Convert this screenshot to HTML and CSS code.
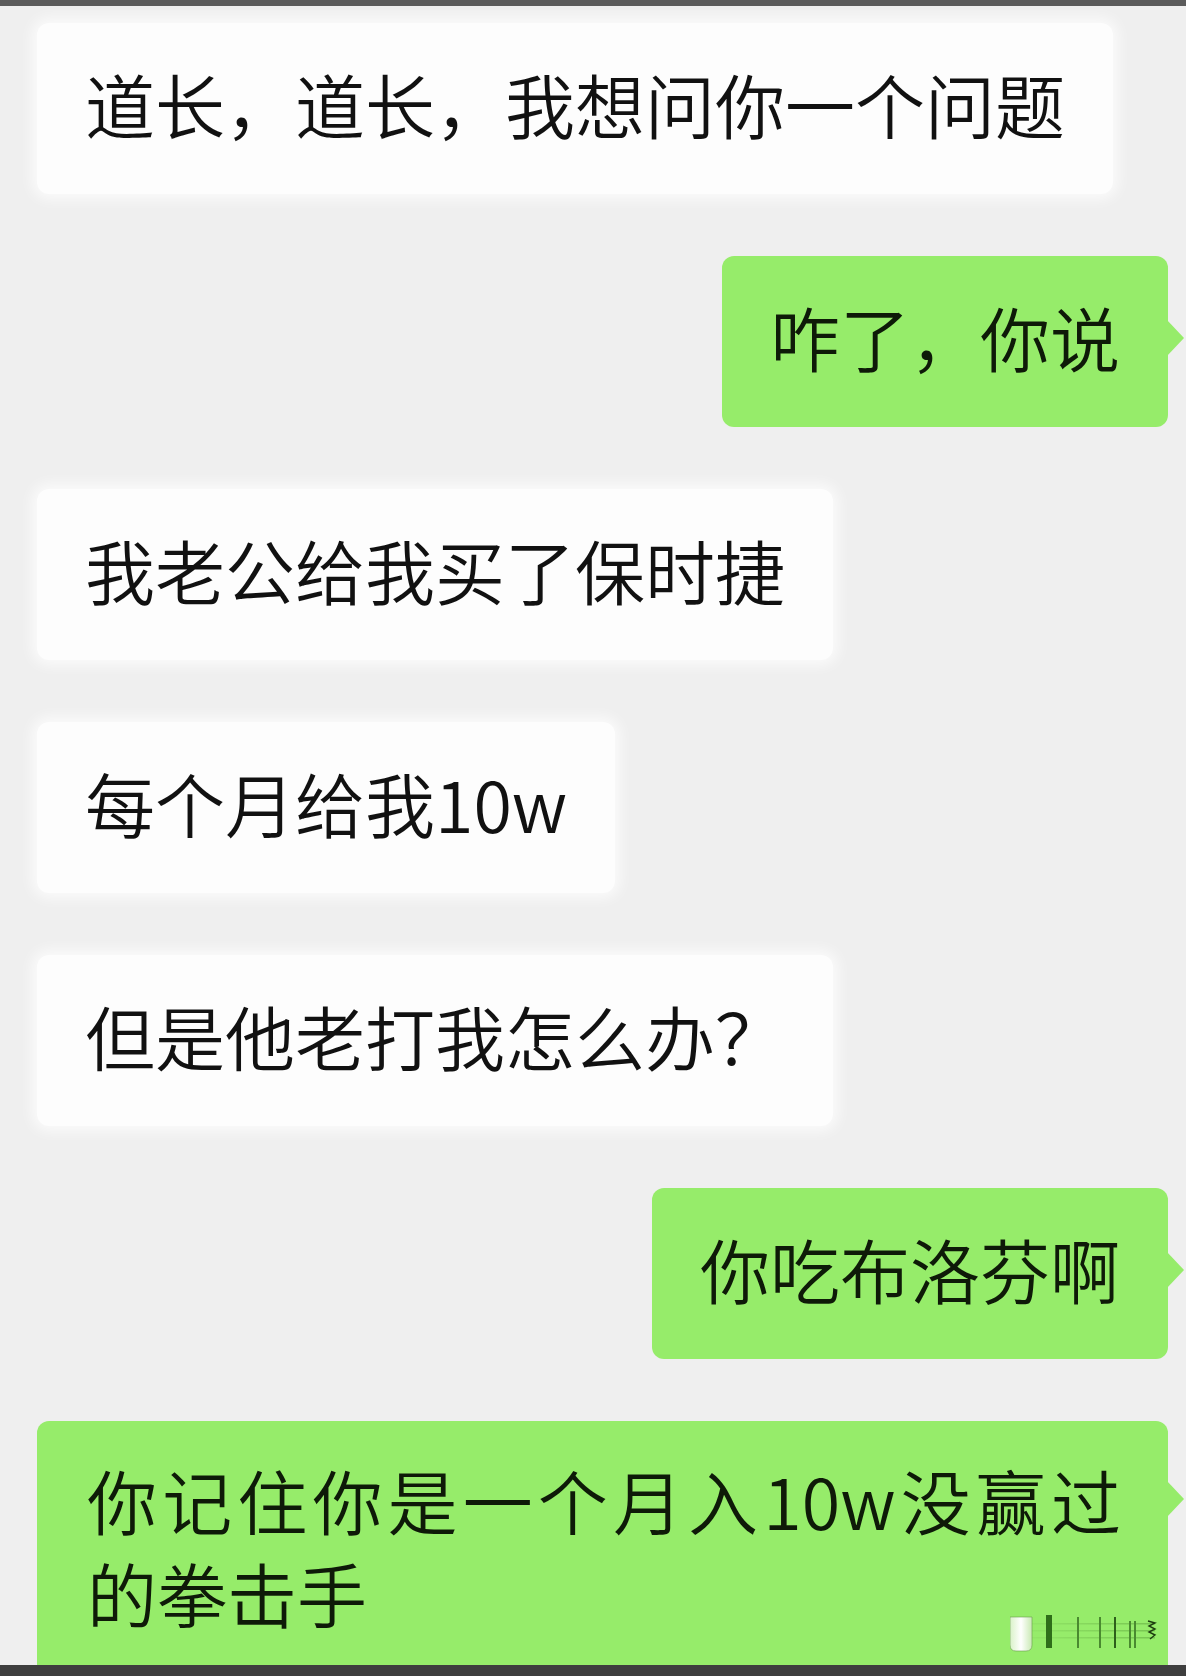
FILE: index.html
```html
<html>

<head>
	<title>聊天记录</title>
	<link rel="stylesheet" href="styles.css">
</head>

<body>
	<div class="screen">
		<div class="top-bar"></div>

		<div class="chat">
			<div class="row left">
				<div class="bubble white">道长，道长，我想问你一个问题</div>
			</div>

			<div class="row right">
				<div class="bubble green">咋了，你说</div>
			</div>

			<div class="row left">
				<div class="bubble white">我老公给我买了保时捷</div>
			</div>

			<div class="row left">
				<div class="bubble white">每个月给我10w</div>
			</div>

			<div class="row left">
				<div class="bubble white">但是他老打我怎么办？</div>
			</div>

			<div class="row right">
				<div class="bubble green">你吃布洛芬啊</div>
			</div>

			<div class="row right full">
				<div class="bubble green long">
					你记住你是一个月入10w没赢过的拳击手
					<!-- watermark in the corner -->
					<svg class="mark" width="150" height="40" viewBox="0 0 150 40">
						<defs>
							<linearGradient id="fade" x1="0" x2="1" y1="0" y2="0">
								<stop offset="0" stop-color="#3d7a22" stop-opacity="0"/>
								<stop offset="1" stop-color="#3d7a22" stop-opacity="0.35"/>
							</linearGradient>
							<linearGradient id="cup" x1="0" x2="1" y1="0" y2="0">
								<stop offset="0" stop-color="#d9f2c8"/>
								<stop offset="0.5" stop-color="#ffffff"/>
								<stop offset="1" stop-color="#c9e9b4"/>
							</linearGradient>
						</defs>
						<rect x="0" y="8" width="145" height="1.5" fill="url(#fade)"/>
						<rect x="0" y="15" width="145" height="1.5" fill="url(#fade)"/>
						<rect x="0" y="22" width="145" height="1.5" fill="url(#fade)"/>
						<path d="M0 2 H22 V30 Q22 36 16 36 H6 Q0 36 0 30 Z" fill="url(#cup)" stroke="#6a9a4f" stroke-width="0.6"/>
						<rect x="36" y="0" width="6" height="33" fill="#2f6e1a"/>
						<rect x="67" y="2" width="2" height="31" fill="#4a8a30"/>
						<rect x="89" y="2" width="2" height="31" fill="#4a8a30"/>
						<rect x="104" y="2" width="2" height="31" fill="#2d5f1b"/>
						<rect x="119" y="6" width="2" height="27" fill="#4a8a30"/>
						<rect x="124" y="6" width="2" height="27" fill="#4a8a30"/>
						<path d="M138 6 L145 8 L139 11 L145 14 L139 17 L145 20 L140 24" fill="none" stroke="#1d3d10" stroke-width="1.4"/>
					</svg>
				</div>
			</div>
		</div>

		<div class="bottom-bar"></div>
	</div>
</body>

</html>
```

FILE: styles.css
```css
		html, body {
            margin: 0;
            padding: 0;
        }

		body {
            font-family: "Noto Sans CJK SC", "Noto Sans", sans-serif;
            font-weight: 350;
            background-color: #efefef;
            color: #111;
        }

        .screen {
            height: 1676px;
            display: flex;
            flex-direction: column;
            overflow: hidden;
        }

        .top-bar {
            height: 6px;
            flex-shrink: 0;
            background-color: #5b5b5b;
        }

        .bottom-bar {
            height: 11px;
            flex-shrink: 0;
            background-color: #3e3e3e;
        }

        .chat {
            flex: 1;
            overflow: hidden;
            display: flex;
            flex-direction: column;
            gap: 62px; /* khoảng cách giữa các tin nhắn */
            padding-top: 17px;
        }

        .row {
            display: flex;
        }

        .row.left {
            justify-content: flex-start;
            padding-left: 37px;
        }

        .row.right {
            justify-content: flex-end;
            padding-right: 18px;
        }

        .row.full {
            padding-left: 37px;
        }

        .bubble {
            position: relative;
            font-size: 70px;
            line-height: 71px;
            padding: 45px 48px 55px;
            border-radius: 12px;
            white-space: nowrap;
        }

        .white {
            background-color: #fdfdfd;
            box-shadow: 0 0 14px 5px rgba(255, 255, 255, 0.75);
        }

        .green {
            background-color: #96ec6a;
            color: #0e1a08;
        }

		/* đuôi bong bóng */
        .green::after {
            content: "";
            position: absolute;
            right: -16px;
            top: 64px;
            border-left: 17px solid #96ec6a;
            border-top: 18px solid transparent;
            border-bottom: 18px solid transparent;
        }

        .long {
            flex: 1;
            white-space: normal;
            text-align: justify;
            line-height: 93px;
            padding: 32px 47px 80px 50px;
        }

        .long::after {
            top: 60px;
        }

        .mark {
            position: absolute;
            right: 8px;
            top: 194px;
        }
```
